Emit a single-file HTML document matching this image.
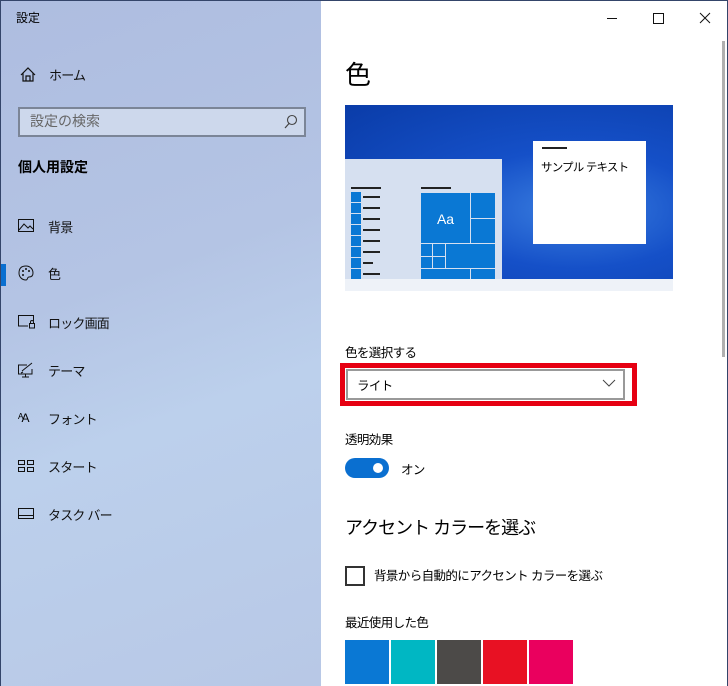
<!DOCTYPE html>
<html><head><meta charset="utf-8"><style>
*{margin:0;padding:0;box-sizing:border-box}
body{width:728px;height:686px;overflow:hidden;font-family:"Liberation Sans","Noto Sans CJK JP",sans-serif;color:#000;position:relative;background:#fff}
.left{position:absolute;left:0;top:0;width:321px;height:686px;background:linear-gradient(160deg,#aebde0 0%,#b4c4e4 40%,#bcd0ec 60%,#b8c8e6 100%);border-left:1px solid #34456a;border-top:1px solid #34456a}
.right{position:absolute;left:321px;top:0;width:407px;height:686px;background:#fff;border-top:1px solid #34456a;border-right:1px solid #34456a}
.a{position:absolute;white-space:nowrap}
.nav{position:absolute;left:47px;font-size:13px;letter-spacing:-0.8px;color:#111}
.ico{position:absolute;left:17px}
.t{position:absolute;background:#0a78d4}
.ln{position:absolute;height:2px;background:#222}
.s{font-size:12.5px;letter-spacing:-0.6px}
</style></head><body>
<div class="left">
<div class="a" style="left:15px;top:8px;font-size:12px">設定</div>
<svg class="ico" style="left:19px;top:66px" width="16" height="15" viewBox="0 0 16 15"><path d="M1 8 L8 1 L15 8 M3 6 V14 H13 V6 M6 14 V9 H10 V14" fill="none" stroke="#111" stroke-width="1.2"/></svg>
<div class="nav" style="top:64px;left:48px">ホーム</div>
<div class="a" style="left:17px;top:106px;width:288px;height:30px;background:#cdd8ec;border:2px solid #7b8597"></div>
<div class="a" style="left:29px;top:110px;font-size:14px;color:#666">設定の検索</div>
<svg class="a" style="left:283px;top:113px" width="14" height="16" viewBox="0 0 14 16"><circle cx="8" cy="6" r="4.5" fill="none" stroke="#444" stroke-width="1.1"/><path d="M5 9.5 L1 14" stroke="#444" stroke-width="1.2"/></svg>
<div class="a" style="left:17px;top:156px;font-size:14px;font-weight:bold">個人用設定</div>
<svg class="ico" style="top:218px" width="17" height="14" viewBox="0 0 17 14"><rect x=".5" y=".5" width="15" height="12" fill="none" stroke="#111"/><path d="M1 11 L6 5 L10 9 L12 7 L15 10" fill="none" stroke="#111"/></svg>
<div class="nav" style="top:216px">背景</div>
<div class="a" style="left:0;top:263px;width:5px;height:22px;background:#0a6fd0"></div>
<svg class="ico" style="top:264px" width="16" height="16" viewBox="0 0 16 16"><path d="M8 1 C3 1 1 4 1 8 C1 12 4 15 8 15 C10 15 9 12 11 12 C14 12 15 10 15 8 C15 4 12 1 8 1Z" fill="none" stroke="#111"/><circle cx="5" cy="6" r="1" fill="#111"/><circle cx="8" cy="4" r="1" fill="#111"/><circle cx="11" cy="6" r="1" fill="#111"/><circle cx="5" cy="10" r="1" fill="#111"/></svg>
<div class="nav" style="top:263px">色</div>
<svg class="ico" style="top:314px" width="18" height="14" viewBox="0 0 18 14"><path d="M10 11 H.5 V.5 H15.5 V6" fill="none" stroke="#111"/><rect x="11.5" y="8.5" width="5" height="4.5" fill="none" stroke="#111"/><path d="M12.5 8.5 V7 A1.5 1.5 0 0 1 15.5 7 V8.5" fill="none" stroke="#111"/></svg>
<div class="nav" style="top:312px">ロック画面</div>
<svg class="ico" style="top:361px" width="16" height="16" viewBox="0 0 16 16"><path d="M9 3 H.5 V12 H14 V7 M4 15 H11 M7.5 12 V15 M4 9 L14 1 M5 10 L3 11" fill="none" stroke="#111"/></svg>
<div class="nav" style="top:360px">テーマ</div>
<div class="a" style="left:17px;top:410px;font-size:12px;letter-spacing:-2px">ᴬA</div>
<div class="nav" style="top:408px">フォント</div>
<svg class="ico" style="top:459px" width="17" height="13" viewBox="0 0 17 13"><rect x=".5" y=".5" width="6" height="4" fill="none" stroke="#111"/><rect x="9.5" y=".5" width="6" height="4" fill="none" stroke="#111"/><rect x=".5" y="7.5" width="6" height="4" fill="none" stroke="#111"/><rect x="9.5" y="7.5" width="6" height="4" fill="none" stroke="#111"/></svg>
<div class="nav" style="top:456px">スタート</div>
<svg class="ico" style="top:507px" width="17" height="12" viewBox="0 0 17 12"><rect x=".5" y=".5" width="15" height="10" fill="none" stroke="#111"/><path d="M1 7.5 H15" stroke="#111"/></svg>
<div class="nav" style="top:504px">タスク バー</div>
</div>
<div class="right">
<svg class="a" style="left:280px;top:10px" width="120" height="16" viewBox="0 0 120 16"><path d="M6 7.5 H16" stroke="#111"/><rect x="52.5" y="2.5" width="10" height="10" fill="none" stroke="#111"/><path d="M99 2 L109 12 M109 2 L99 12" stroke="#111"/></svg>
<div class="a" style="left:401px;top:40px;width:3px;height:316px;background:#b0b0b0"></div>
<div class="a" style="left:24px;top:54px;font-size:26px">色</div>
<div class="a" style="left:24px;top:104px;width:328px;height:186px;background:#eef2f8"></div>
<div class="a" style="left:24px;top:104px;width:328px;height:174px;background:radial-gradient(ellipse at 70% 60%,#3b7fe0 0%,#1550c8 40%,#0a3ca8 100%)"></div>
<div class="a" style="left:24px;top:158px;width:157px;height:120px;background:#d6e0f0"></div>
<div class="a" style="left:212px;top:140px;width:113px;height:103px;background:#fff"></div>
<div class="ln" style="left:221px;top:146px;width:25px"></div>
<div class="a" style="left:220px;top:158px;font-size:11.5px;letter-spacing:-0.8px">サンプル テキスト</div>
<div class="ln" style="left:30px;top:186px;width:30px"></div>
<div class="ln" style="left:100px;top:186px;width:30px"></div>
<div class="t" style="left:30px;top:191px;width:10px;height:87px;background:repeating-linear-gradient(#0a78d4 0 10px,#d6e0f0 10px 11px)"></div>
<div class="ln" style="left:42px;top:195px;width:17px"></div>
<div class="ln" style="left:42px;top:206px;width:17px"></div>
<div class="ln" style="left:42px;top:217px;width:17px"></div>
<div class="ln" style="left:42px;top:228px;width:17px"></div>
<div class="ln" style="left:42px;top:239px;width:17px"></div>
<div class="ln" style="left:42px;top:250px;width:17px"></div>
<div class="ln" style="left:42px;top:261px;width:10px"></div>
<div class="ln" style="left:42px;top:272px;width:17px"></div>
<div class="t" style="left:100px;top:192px;width:49px;height:50px;color:#fff;font-size:14px;text-align:center;line-height:52px">Aa</div>
<div class="t" style="left:150px;top:192px;width:24px;height:25px"></div>
<div class="t" style="left:150px;top:218px;width:24px;height:24px"></div>
<div class="t" style="left:100px;top:243px;width:11px;height:12px"></div>
<div class="t" style="left:112px;top:243px;width:12px;height:12px"></div>
<div class="t" style="left:100px;top:256px;width:11px;height:11px"></div>
<div class="t" style="left:112px;top:256px;width:12px;height:11px"></div>
<div class="t" style="left:125px;top:243px;width:49px;height:24px"></div>
<div class="t" style="left:100px;top:268px;width:49px;height:10px"></div>
<div class="t" style="left:150px;top:268px;width:24px;height:10px"></div>
<div class="a s" style="left:24px;top:341px">色を選択する</div>
<div class="a" style="left:19px;top:362px;width:297px;height:43px;border:5px solid #e60012"></div>
<div class="a" style="left:25px;top:368px;width:279px;height:31px;border:2px solid #999;background:#fff"></div>
<div class="a s" style="left:36px;top:374px">ライト</div>
<svg class="a" style="left:281px;top:378px" width="14" height="9" viewBox="0 0 14 9"><path d="M1 1 L7 7 L13 1" fill="none" stroke="#444"/></svg>
<div class="a s" style="left:24px;top:428px">透明効果</div>
<div class="a" style="left:24px;top:457px;width:44px;height:20px;border-radius:10px;background:#0a6fd0"></div>
<div class="a" style="left:52px;top:462px;width:10px;height:10px;border-radius:5px;background:#fff"></div>
<div class="a s" style="left:80px;top:458px">オン</div>
<div class="a" style="left:24px;top:513px;font-size:18px;letter-spacing:-1px">アクセント カラーを選ぶ</div>
<div class="a" style="left:24px;top:565px;width:20px;height:20px;border:2px solid #333"></div>
<div class="a s" style="left:53px;top:564px">背景から自動的にアクセント カラーを選ぶ</div>
<div class="a s" style="left:24px;top:611px">最近使用した色</div>
<div class="a" style="left:24px;top:639px;width:44px;height:44px;background:#0a78d4"></div>
<div class="a" style="left:70px;top:639px;width:44px;height:44px;background:#00b7c3"></div>
<div class="a" style="left:116px;top:639px;width:44px;height:44px;background:#4c4a48"></div>
<div class="a" style="left:162px;top:639px;width:44px;height:44px;background:#e81123"></div>
<div class="a" style="left:208px;top:639px;width:44px;height:44px;background:#ea005e"></div>
</div>
</body></html>
